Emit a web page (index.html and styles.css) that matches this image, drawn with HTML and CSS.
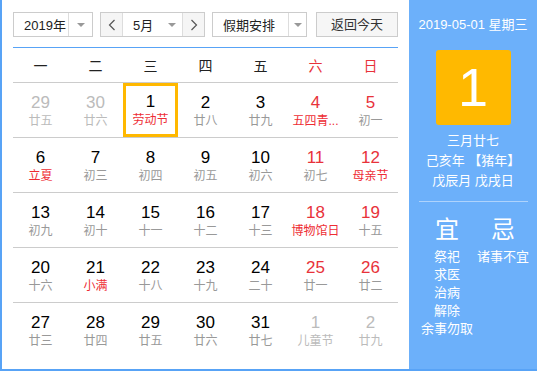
FILE: index.html
```html
<!DOCTYPE html>
<html>
<head>
	<meta charset="utf-8">
	<title>万年历</title>
	<link rel="stylesheet" href="styles.css">
</head>
<body>
<div class="cal">
	<div class="main">
		<div class="bar">
			<div class="sel year">
				<span class="txt">2019年</span>
				<span class="arr"></span>
			</div>
			<div class="sel month">
				<span class="btn prev"><svg width="8" height="12" viewBox="0 0 8 12"><polyline points="6.5,1 1.5,6 6.5,11" fill="none" stroke="#555" stroke-width="1.2"/></svg></span>
				<span class="txt">5月</span>
				<span class="arr"></span>
				<span class="btn next"><svg width="8" height="12" viewBox="0 0 8 12"><polyline points="1.5,1 6.5,6 1.5,11" fill="none" stroke="#555" stroke-width="1.2"/></svg></span>
			</div>
			<div class="sel holiday">
				<span class="txt">假期安排</span>
				<span class="arr"></span>
			</div>
			<a class="today" href="javascript:;">返回今天</a>
		</div>

		<div class="grid">
			<div class="week">
				<span>一</span><span>二</span><span>三</span><span>四</span><span>五</span><span class="red">六</span><span class="red">日</span>
			</div>
			<div class="row">
				<div class="cell other"><b>29</b><i>廿五</i></div>
				<div class="cell other"><b>30</b><i>廿六</i></div>
				<div class="cell on"><b>1</b><i class="fest">劳动节</i></div>
				<div class="cell"><b>2</b><i>廿八</i></div>
				<div class="cell"><b>3</b><i>廿九</i></div>
				<div class="cell wk"><b>4</b><i class="fest" title="五四青年节">五四青...</i></div>
				<div class="cell wk"><b>5</b><i>初一</i></div>
			</div>
			<div class="row">
				<div class="cell"><b>6</b><i class="fest">立夏</i></div>
				<div class="cell"><b>7</b><i>初三</i></div>
				<div class="cell"><b>8</b><i>初四</i></div>
				<div class="cell"><b>9</b><i>初五</i></div>
				<div class="cell"><b>10</b><i>初六</i></div>
				<div class="cell wk"><b>11</b><i>初七</i></div>
				<div class="cell wk"><b>12</b><i class="fest">母亲节</i></div>
			</div>
			<div class="row">
				<div class="cell"><b>13</b><i>初九</i></div>
				<div class="cell"><b>14</b><i>初十</i></div>
				<div class="cell"><b>15</b><i>十一</i></div>
				<div class="cell"><b>16</b><i>十二</i></div>
				<div class="cell"><b>17</b><i>十三</i></div>
				<div class="cell wk"><b>18</b><i class="fest">博物馆日</i></div>
				<div class="cell wk"><b>19</b><i>十五</i></div>
			</div>
			<div class="row">
				<div class="cell"><b>20</b><i>十六</i></div>
				<div class="cell"><b>21</b><i class="fest">小满</i></div>
				<div class="cell"><b>22</b><i>十八</i></div>
				<div class="cell"><b>23</b><i>十九</i></div>
				<div class="cell"><b>24</b><i>二十</i></div>
				<div class="cell wk"><b>25</b><i>廿一</i></div>
				<div class="cell wk"><b>26</b><i>廿二</i></div>
			</div>
			<div class="row last">
				<div class="cell"><b>27</b><i>廿三</i></div>
				<div class="cell"><b>28</b><i>廿四</i></div>
				<div class="cell"><b>29</b><i>廿五</i></div>
				<div class="cell"><b>30</b><i>廿六</i></div>
				<div class="cell"><b>31</b><i>廿七</i></div>
				<div class="cell other"><b>1</b><i>儿童节</i></div>
				<div class="cell other"><b>2</b><i>廿九</i></div>
			</div>
		</div>
	</div>

	<div class="side">
		<p class="date">2019-05-01 星期三</p>
		<div class="day">1</div>
		<div class="lunar">
			<p>三月廿七</p>
			<p>己亥年 【猪年】</p>
			<p>戊辰月 戊戌日</p>
		</div>
		<div class="line"></div>
		<div class="yiji">
			<div class="col">
				<h3>宜</h3>
				<p>祭祀</p>
				<p>求医</p>
				<p>治病</p>
				<p>解除</p>
				<p>余事勿取</p>
			</div>
			<div class="col">
				<h3>忌</h3>
				<p>诸事不宜</p>
			</div>
		</div>
	</div>
</div>
</body>
</html>
```

FILE: styles.css
```css
*{box-sizing:border-box;}
html,body{margin:0;padding:0;overflow:hidden;}
body,div,p,h3{margin:0;padding:0;}
body{background:#fff;color:#333;font:13px "Liberation Sans","Noto Sans CJK SC",sans-serif;}

.cal{display:flex;width:537px;height:371px;border-left:2px solid #58a3f6;border-bottom:2px solid #58a3f6;}
.main{width:407px;padding:12px 11px 0;background:#fff;}
.side{flex:1;background:#6cb0fa;color:#fff;}

/* toolbar */
.bar{display:flex;height:25px;}
.sel{display:flex;height:25px;border:1px solid #ccc;background:#fff;margin-right:7px;}
.sel .txt{display:flex;align-items:center;padding-left:10px;color:#222;}
.sel .arr{display:flex;align-items:center;justify-content:center;width:23px;}
.sel .arr:after{content:"";border-top:4px solid #999;border-left:4px solid transparent;border-right:4px solid transparent;}
.year{width:80px;}
.year .txt{width:55px;border-right:1px solid #ddd;}
.month{width:105px;}
.month .btn{display:flex;align-items:center;justify-content:center;width:22px;background:#f5f5f5;}
.month .prev{border-right:1px solid #ddd;}
.month .next{border-left:1px solid #ddd;}
.month .txt{flex:1;}
.month .arr{width:20px;}
.holiday{width:95px;margin-right:9px;}
.holiday .txt{width:77px;border-right:1px solid #ddd;}
.holiday .arr{width:17px;}
.today{width:82px;height:25px;line-height:23px;text-align:center;border:1px solid #ccc;background:#f6f6f6;color:#333;text-decoration:none;}

/* table */
.grid{margin-top:10px;border-top:1px solid #58a3f6;}
.week,.row{display:grid;grid-template-columns:repeat(7,55px);border-bottom:1px solid #ccc;}
.week{height:35px;align-items:center;text-align:center;font-size:14px;color:#222;}
.row{height:55px;}
.row.last{border-bottom:0;}
.red{color:#e8323a;}
.cell{display:flex;flex-direction:column;align-items:center;justify-content:center;padding-top:2px;}
.cell b{font-weight:normal;font-size:17px;line-height:20px;color:#000;}
.cell i{font-style:normal;font-size:12px;line-height:17px;color:#999;white-space:nowrap;}
.cell.wk b{color:#e8323a;}
.cell i.fest{color:#ee2d34;}
.cell.other b,.cell.other i{color:#bbb;}
.cell.on{border:3px solid #ffb800;padding-top:0;}

/* side */
.date{padding-top:17px;text-align:center;font-size:13px;line-height:16px;}
.day{width:75px;height:75px;margin:17px auto 0;background:#ffb900;border-radius:3px;text-align:center;font-size:54px;line-height:75px;}
.lunar{margin-top:6px;text-align:center;line-height:20px;font-size:13px;}
.line{height:1px;margin:10px 9px 0 10px;background:rgba(255,255,255,.45);}
.yiji{display:flex;padding-left:10px;margin-top:13px;}
.col{width:56px;text-align:center;}
.col h3{font-weight:normal;font-size:24px;line-height:30px;margin-bottom:3px;}
.col p{font-size:13px;line-height:18px;}
```
